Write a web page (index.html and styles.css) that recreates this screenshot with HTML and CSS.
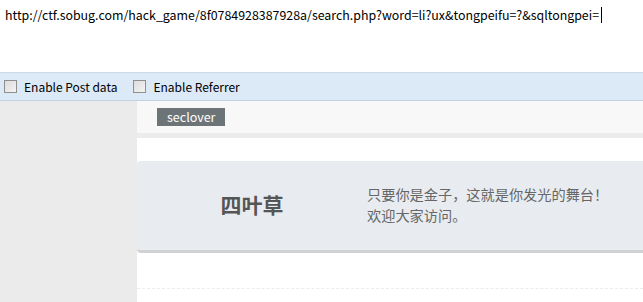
FILE: index.html
```html
<!DOCTYPE html>
<html>
<head>
<meta charset="utf-8">
<link rel="stylesheet" href="styles.css">
</head>
<body>
<div class="urlbox"><span class="url">http://ctf.sobug.com/hack_game/8f0784928387928a/search.php?word=li?ux&amp;tongpeifu=?&amp;sqltongpei=</span><span class="caret"></span></div>
<div class="optbar">
  <label class="opt"><span class="cb"></span>Enable Post data</label>
  <label class="opt"><span class="cb"></span>Enable Referrer</label>
</div>
<div class="page">
  <div class="side"></div>
  <div class="main">
    <div class="tagrow"><span class="tag">seclover</span></div>
    <div class="sep"></div>
    <div class="content">
      <div class="card">
        <div class="brand">四叶草</div>
        <div class="slogan">只要你是金子，这就是你发光的舞台！<br>欢迎大家访问。</div>
      </div>
      <div class="dash"></div>
    </div>
  </div>
</div>
</body>
</html>
```
FILE: styles.css
```css
html, body { margin: 0; padding: 0; }
body {
  width: 643px; height: 302px; overflow: hidden;
  font-family: "Noto Sans CJK SC", "Noto Sans", sans-serif;
  background: #fff;
}
.urlbox {
  height: 73px;
  border-bottom: 1px solid #c9d9e8;
  padding: 6px 0 0 5px;
  box-sizing: border-box;
  display: flex; align-items: flex-start;
  font-size: 12.4px; line-height: 18px; color: #000;
}
.caret { display: inline-block; width: 1px; height: 16px; background: #000; margin: 1px 0 0 2px; }
.optbar {
  height: 27px;
  background: #dce9f6;
  border-bottom: 1px solid #c2d2e2;
  display: flex; align-items: center; gap: 16px;
  padding-left: 4px;
  font-size: 12px; color: #000;
}
.opt { display: flex; align-items: center; }
.cb {
  width: 11px; height: 11px; border: 1px solid #8f8f8f;
  background: linear-gradient(135deg, #dcdcdc, #f4f4f4);
  margin-right: 7px;
}
.page { display: flex; height: 201px; }
.side { width: 137px; background: #ebebeb; flex: none; }
.main { flex: 1; display: flex; flex-direction: column; }
.tagrow { height: 32px; background: #f8f8f8; padding: 7px 0 0 20px; box-sizing: border-box; display: flex; align-items: flex-start; }
.tag {
  display: block; background: #6d7478; color: #fff;
  font-size: 12.5px; line-height: 18px; padding: 0 10px; height: 18px;
}
.sep { height: 5px; background: #ececec; }
.content { flex: 1; background: #fff; padding-top: 23px; }
.card {
  height: 89px; background: #e8ecf0;
  border-bottom: 3px solid #cfd1d3;
  border-radius: 4px 0 0 4px;
  display: flex; align-items: center;
}
.brand { width: 230px; text-align: center; font-size: 21px; font-weight: bold; color: #555; margin-top: -3px; }
.slogan { font-size: 14.2px; line-height: 21px; color: #666; margin-top: -2px; }
.dash { margin-top: 35px; border-top: 1px dashed #ececec; }
```
